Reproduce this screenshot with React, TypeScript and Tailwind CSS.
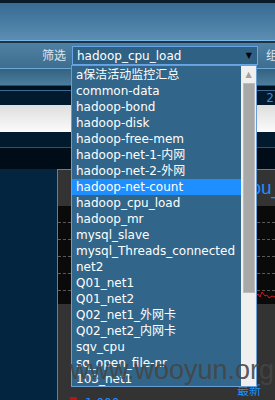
const items = [
  "a保洁活动监控汇总",
  "common-data",
  "hadoop-bond",
  "hadoop-disk",
  "hadoop-free-mem",
  "hadoop-net-1-内网",
  "hadoop-net-2-外网",
  "hadoop-net-count",
  "hadoop_cpu_load",
  "hadoop_mr",
  "mysql_slave",
  "mysql_Threads_connected",
  "net2",
  "Q01_net1",
  "Q01_net2",
  "Q02_net1_外网卡",
  "Q02_net2_内网卡",
  "sqv_cpu",
  "sq_open_file-nr",
  "103_net1",
];

const font = "font-['DejaVu_Sans','Noto_Sans_CJK_SC',sans-serif]";

const DropdownList = () => (
  <div className="absolute left-[71px] top-[65px] w-[186px] h-[322px] border border-[#6a9ed2] bg-[#31668a] z-10">
    <ul className="w-[169px] pt-px">
      {items.map((item) => (
        <li
          key={item}
          className={`h-4 leading-4 pl-[4px] text-[12px] text-white whitespace-nowrap ${
            item === "hadoop-net-count" ? "bg-[#1f8fff]" : ""
          }`}
        >
          {item}
        </li>
      ))}
    </ul>
    {/* scrollbar */}
    <div className="absolute right-0 top-0 bottom-0 w-[15px] bg-[#efefef] flex flex-col items-center">
      <div className="h-[17px] flex items-center justify-center text-[8px] text-[#a2a2a2] leading-none">
        ▲
      </div>
      <div className="w-[12px] h-[210px] bg-[#a8a8a8] border border-[#bcbcbc]" />
    </div>
  </div>
);

export default function App() {
  return (
    <div className={`relative w-[275px] h-[400px] overflow-hidden bg-[#04253f] ${font}`}>
      <div className="h-[3px] bg-[#0b1a28]" />
      <div className="h-[37px] bg-gradient-to-b from-[#376b93] to-[#5b8eb1]" />
      <div className="h-px bg-[#7ab6e6]" />
      <div className="h-[2px] bg-[#1c3548]" />

      {/* filter bar */}
      <div className="h-[25px] flex items-center pl-[42px] gap-[6px] bg-gradient-to-b from-[#4f81a3] to-[#3d6e90] whitespace-nowrap">
        <span className="shrink-0 text-[12px] text-[#dce8f2] leading-none">筛选</span>
        <div className="shrink-0 w-[186px] h-[19px] border border-[#6aa4e6] bg-[#2f6185] flex items-center justify-between pl-[4px] pr-[5px]">
          <span className="text-[12px] text-white leading-none">hadoop_cpu_load</span>
          <span className="text-[8px] text-black leading-none">▼</span>
        </div>
        <span className="shrink-0 pl-[2px] text-[12px] text-[#dce8f2] leading-none">组</span>
      </div>

      <div className="h-px bg-[#6ca8d8]" />
      <div className="h-4 bg-gradient-to-b from-[#33637f] to-[#4b7d9f]" />
      <div className="h-px bg-[#2a4a66]" />
      <div className="h-[4px] bg-[#00111f]" />
      <div className="h-px bg-[#3a6a94]" />
      <div className="h-[14px] bg-[#011a2d] flex items-center justify-end pr-[1px]">
        <span className="text-[12px] text-[#2a90e0] leading-none">2</span>
      </div>
      <div className="h-[27px] bg-gradient-to-b from-[#dedede] to-[#fbfbfb]" />
      <div className="h-[15px] bg-[#011a2d]" />
      <div className="h-px bg-[#2f5270]" />
      <div className="h-[21px] bg-[#000d19]" />

      <div className="flex h-[231px]">
        <div className="w-[57px] shrink-0 bg-[#04253f]" />
        <div className="flex-1 min-w-0 overflow-hidden flex flex-col bg-[#333333] border-l border-t border-[#7a7a7a]">
          <div className="h-[36px] flex items-center pl-[109px]">
            <span className="text-[19px] text-[#1e8fff] whitespace-nowrap font-['Liberation_Sans',sans-serif]">
              hadoop_cpu_load
            </span>
          </div>
          <div className="relative h-[98px] bg-[#0a0a0a] flex flex-col pt-[16px] gap-[16px]">
            <div className="border-t border-dashed border-[#5a5a5a]" />
            <div className="border-t border-dashed border-[#5a5a5a]" />
            <div className="border-t border-dashed border-[#5a5a5a]" />
            <div className="border-t border-dashed border-[#5a5a5a]" />
            <div className="border-t border-dashed border-[#5a5a5a]" />
            <svg className="absolute right-0 bottom-[4px]" width="20" height="10" viewBox="0 0 20 10">
              <polyline
                points="0,8 3,4 5,7 7,2 10,6 12,5 14,8 17,6 20,7"
                fill="none"
                stroke="#e01010"
                strokeWidth="1"
              />
            </svg>
          </div>
          <div className="flex-1 flex flex-col justify-end">
            <div className="flex justify-end pr-[14px]">
              <span className="text-[12px] leading-none text-[#1e8fff]">最新</span>
            </div>
            <div className="h-[3px] flex items-start gap-2 pl-[12px] overflow-hidden">
              <div className="shrink-0 w-[7px] h-[7px] bg-[#b01818]" />
              <span className="text-[12px] leading-none text-[#1e8fff] whitespace-nowrap">1 000</span>
            </div>
          </div>
        </div>
      </div>

      <DropdownList />

      <div className="absolute left-[70px] top-[357px] z-20 text-[27px] leading-none text-[#454545]/90 font-['Liberation_Sans',sans-serif] whitespace-nowrap">
        www.wooyun.org
      </div>
    </div>
  );
}
